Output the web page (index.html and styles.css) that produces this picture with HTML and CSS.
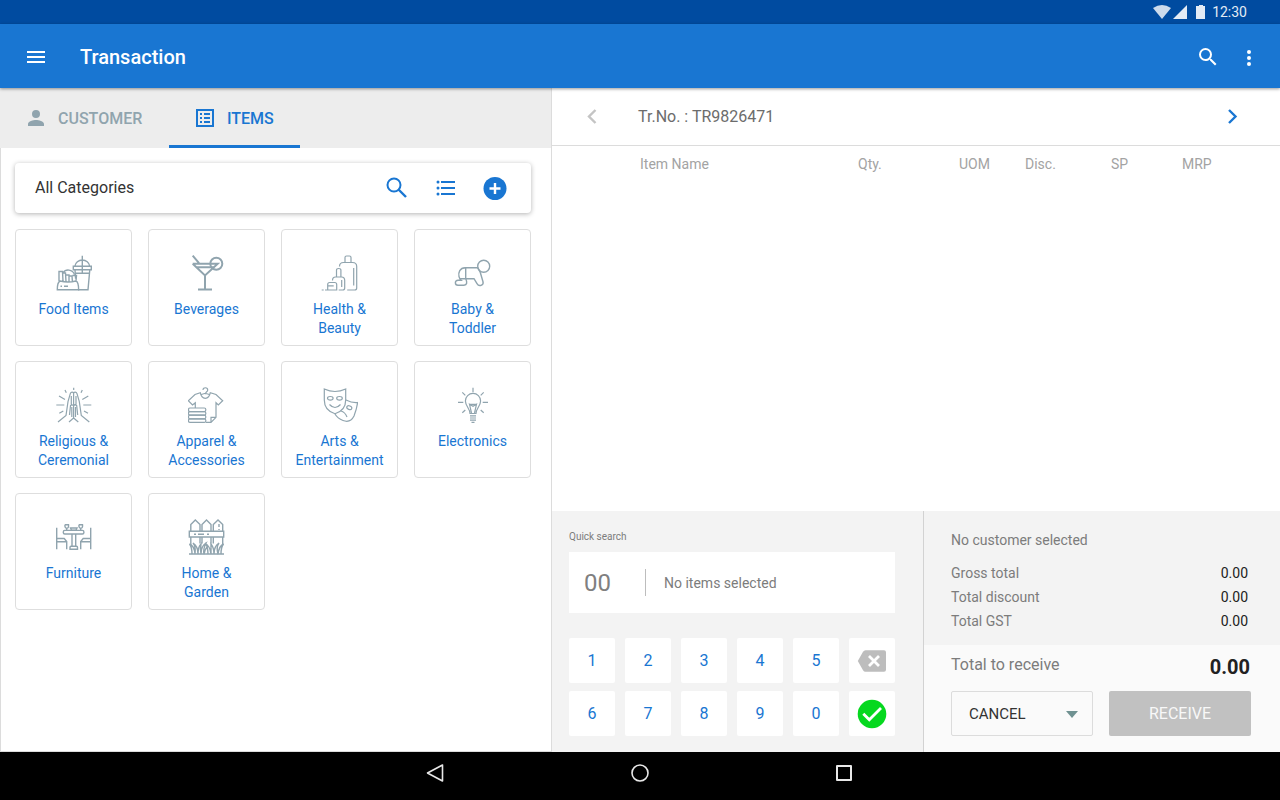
FILE: index.html
```html
<!DOCTYPE html>
<html lang="en">
  <head>
    <meta charset="UTF-8" />
    <meta name="viewport" content="width=device-width, initial-scale=1.0" />
    <title>Transaction</title>
    <link rel="stylesheet" href="styles.css">
  </head>
  <body>
    <div class="status-bar">
      <svg width="52" height="16" viewBox="0 0 52 16" fill="#e3ebf5">
        <path fill="#ccdaeb" d="M0 4 Q9 -2 18 4 L9 15 Z" />
        <path d="M20 15 L34 1 V15 Z" />
        <path d="M43 2 h3 V1 h4 v1 h2 V15 H43 Z" />
      </svg>
      <span>12:30</span>
    </div>

    <header class="app-bar">
      <button class="icon-button" aria-label="Menu">
        <svg width="24" height="24" viewBox="0 0 24 24" fill="currentColor"><path d="M3 6h18v2H3zM3 11h18v2H3zM3 16h18v2H3z" /></svg>
      </button>
      <h1>Transaction</h1>
      <button class="icon-button" aria-label="Search">
        <svg width="24" height="24" viewBox="0 0 24 24" fill="currentColor"><path d="M15.5 14h-.79l-.28-.27A6.47 6.47 0 0 0 16 9.5 6.5 6.5 0 1 0 9.5 16c1.61 0 3.09-.59 4.23-1.57l.27.28v.79l5 4.99L20.49 19l-4.99-5zm-6 0a4.5 4.5 0 1 1 0-9 4.5 4.5 0 0 1 0 9z" /></svg>
      </button>
      <button class="icon-button" aria-label="More">
        <svg width="24" height="24" viewBox="0 0 24 24" fill="currentColor"><circle cx="12" cy="7" r="2" /><circle cx="12" cy="13" r="2" /><circle cx="12" cy="19" r="2" /></svg>
      </button>
    </header>

    <main class="main">
      <section class="catalog">
        <nav class="tabs">
          <button class="tab">
            <svg width="24" height="24" viewBox="0 0 24 24" fill="currentColor"><path d="M12 12a4 4 0 1 0 0-8 4 4 0 0 0 0 8zm0 2c-2.67 0-8 1.34-8 4v2h16v-2c0-2.66-5.33-4-8-4z" /></svg>
            CUSTOMER
          </button>
          <button class="tab active">
            <svg width="24" height="24" viewBox="0 0 24 24" fill="currentColor"><path fill-rule="evenodd" d="M3 3h18v18H3zM5 5v14h14V5zM7 7h2v2H7zM11 7h6v2h-6zM7 11h2v2H7zM11 11h6v2h-6zM7 15h2v2H7zM11 15h6v2h-6z" /></svg>
            ITEMS
          </button>
        </nav>

        <div class="catalog-body">
          <div class="toolbar">
            <h2>All Categories</h2>
            <button class="icon-button" aria-label="Search items">
              <svg width="24" height="24" viewBox="0 0 24 24" fill="none" stroke="currentColor" stroke-width="2"><circle cx="9" cy="9" r="6.5" /><path stroke-width="2.4" d="M13.500 13.500l7.500 7.500" /></svg>
            </button>
            <button class="icon-button" aria-label="List view">
              <svg width="24" height="24" viewBox="0 0 24 24" fill="currentColor"><path d="M7 5h14v2H7zM7 11h14v2H7zM7 17h14v2H7z" /><circle cx="4" cy="6" r="1.5" /><circle cx="4" cy="12" r="1.5" /><circle cx="4" cy="18" r="1.5" /></svg>
            </button>
            <button class="icon-button" aria-label="Add category">
              <svg width="24" height="24" viewBox="0 0 24 24"><circle cx="12" cy="12.500" r="11.500" fill="currentColor" /><path stroke="#fff" stroke-width="2.400" d="M12 7v11M6.500 12.500h11" /></svg>
            </button>
          </div>

          <div class="categories">
            <button class="category">
              <svg viewBox="0 0 37 37" class="medium">
                <path d="M27.3 .7V18M19.8 11.3a7.6 7.6 0 0 1 15 0M18.3 11.3h18v3.4h-18zM20 14.7l.6 9M20.5 18.2h14M34.8 14.7l-1.8 20H23" />
                <path d="M5 26c-2 1-2.7 4-2.7 8.700h21.300c0-5-.6-8-2.600-8.700-5 1.300-11 1.300-16 0zM4 26V16.500h3.500l.5 9.800M7.500 18h3l.5 8.700M11 20h3v6.700M14 21h3l.4 5.500M17.500 20.500h4l-.5 5.500M8.500 17.500c2-3.500 9-3.500 11 2" />
                <path d="M5.500 31.300h1.500M9 31.300h4" />
              </svg>
              <span>Food Items</span>
            </button>
            <button class="category">
              <svg viewBox="0 0 37 37" class="bold">
                <path d="M4.700 .7l6.300 7.500M4.700 8.800h25L17 20.500 4.700 8.800M8.500 12.200h17M17 20.500v14M10 34.600h14" />
                <circle cx="28.300" cy="8.800" r="6" />
              </svg>
              <span>Beverages</span>
            </button>
            <button class="category">
              <svg viewBox="0 0 37 37">
                <path d="M24 7V2.500q0-1.500 1.500-1.500h3q1.500 0 1.500 1.500V7M18.500 11.500q0-4 4-4h9q4.200 0 4.200 4V33q0 2-2 2h-7.500M32.700 13v17.500" />
                <path d="M15.500 21.500v-6.500q0-1.500 2.200-1.500t2.200 1.500v6.500M11.500 25.500q0-3.500 3-3.500h6q3.200 0 3.200 3.500V33q0 2-2 2h-4M20.700 25v7" />
                <path d="M6.700 29.500q0-2 2-2h5q2 0 2 2V35h-9zM6.700 30.800h6M.7 35h2M4 35h2.500" />
              </svg>
              <span>Health &amp;<br />Beauty</span>
            </button>
            <button class="category">
              <svg viewBox="0 0 37 37" class="medium">
                <circle cx="29.700" cy="11.300" r="6" />
                <path d="M23.700 12.700H11c-5 0-7 5-6 9 .4 1.500 1 2.700 2 3.500H4c-3.500 0-3.500 5 0 5h6c3 0 3.500-3 1.700-6.500V12.700M6 23.700h14l3 5c2 3.500 7 1.500 6-2L26.300 17.500M23.700 12.700l2.600 4.800" />
              </svg>
              <span>Baby &amp;<br />Toddler</span>
            </button>
            <button class="category">
              <svg viewBox="0 0 37 37">
                <path d="M18.700 .7V3M10 3l1.300 2.700M27.300 3L26 5.700M4 9l6 3.500M33.300 9l-6 3.500M1.300 18h8M28.300 18h8M4.300 26.300l4-2.300M33 26.300l-4-2.300" />
                <path d="M3 35l8-6.500L13 14.700l2.300-8c.7-2.300 3.300-2 3.300 0V31l-4.600 4M34.300 35l-8-6.500-2-13.800-2.300-8c-.7-2.300-3.400-2-3.400 0M18.600 31l4.700 4M16.300 9v9M21 9v9M14.500 28l1-9.500q1.500-1.500 3 0M22.700 28l-1-9.500q-1.500-1.500-3 0M16.800 20v10M20.500 20v10" />
              </svg>
              <span>Religious &amp;<br />Ceremonial</span>
            </button>
            <button class="category">
              <svg viewBox="0 0 37 37">
                <path d="M15 3c0-3 4.700-3 4.700 0 0 2-2.400 1.500-2.400 4.300M7.300 21v-5.300L4.500 18 .3 13.700 7 7.500l5.300-1.800q1 5.600 5 5.600t5-5.600L28 7.500l6.700 6.200-4.400 4.300-2.300-2.300v14.600l-5 5h-5M23 35.300v-5h5M12.500 7.800l4.800-1.500 4.800 1.500" />
                <rect x=".5" y="21" width="17.300" height="3.600" rx="1.500" />
                <rect x=".5" y="24.600" width="17.300" height="3.600" rx="1.500" />
                <rect x=".5" y="28.200" width="17.300" height="3.600" rx="1.500" />
                <rect x=".5" y="31.800" width="17.300" height="3.600" rx="1.500" />
              </svg>
              <span>Apparel &amp;<br />Accessories</span>
            </button>
            <button class="category">
              <svg viewBox="0 0 37 37">
                <path d="M3.300 2q10.700 5 21.400 0v11c0 8-5 12-10.700 13.700C8.300 25 3.300 21 3.300 13zM8.500 17.500q5.500 6 11 0" />
                <ellipse cx="9.300" cy="11.300" rx="2.800" ry="1.800" />
                <ellipse cx="18.500" cy="11.300" rx="2.800" ry="1.800" />
                <path d="M25 13q6 3 11.600 2.500c-.5 4-1.600 8-3.600 13.500-2.500 5-7 6-11 4.500-3.500-1.300-6-3-8-6.500M20 24q4 1 6 6" />
                <ellipse cx="28.300" cy="20.700" rx="2.600" ry="1.800" transform="rotate(20 28.300 20.700)" />
              </svg>
              <span>Arts &amp;<br />Entertainment</span>
            </button>
            <button class="category">
              <svg viewBox="0 0 37 37">
                <path d="M19 .7v4.600M8.300 5.300l3 3M29.700 5.300l-3 3M4 15.300h5.300M28.700 15.300H34M8.300 25.700l3-2.700M29.700 25.700l-3-2.700" />
                <path d="M16 26.500c0-5-4.600-7.500-4.600-12.500a7.600 7.600 0 0 1 15.200 0c0 5-4.600 7.500-4.600 12.500zM17.500 26l-2-8.700 3.500 2 3.500-2-2 8.700M15.500 17.300h7M16 28.800h6M16 31h6M16 33.200h6M17.500 35.300h3" />
              </svg>
              <span>Electronics</span>
            </button>
            <button class="category">
              <svg viewBox="0 0 37 37" class="medium">
                <path d="M1.700 8.700v21.600M1.700 19.500h7.500l2.500 3v7.800M1.700 22.700h10M35.700 8.700v21.600M35.700 19.500h-7.500l-2.500 3v7.800M35.700 22.700h-10" />
                <rect x="8.300" y="11.400" width="20.600" height="3.600" rx="1.500" />
                <path d="M17 15v12.300M20.700 15v12.300M15 30.300v-2q0-1 1-1h5.500q1 0 1 1v2zM10 5.700h3.500q.5 3.300-1.700 3.500Q9.500 9 10 5.700M11.700 9.200v2M24 5.700h3.500q.5 3.300-1.700 3.500Q23.500 9 24 5.700M25.700 9.200v2M15.500 9h6.500l-1 2.300h-4.500z" />
              </svg>
              <span>Furniture</span>
            </button>
            <button class="category">
              <svg viewBox="0 0 37 37" class="medium">
                <path d="M2.800 12.300V5.500L7.300 1 12 5.500v6.800M14 12.300V5.500L18.500 1 23 5.500v6.800M25.300 12.300V5.500L30 1l4.700 4.500v6.800M1.300 12.300h34.400V18H1.300zM6 15.200h2M10 15.200h6M19 15.200h2M31 5v3M31 10v1" />
                <path d="M2.800 18v8M12 18v6.500M14 18v6.500M23 18v6.500M25.300 18v6.500M34.700 18v8M1 35h35" />
                <path d="M4 35Q4 28 1.500 25q5 2 5.500 10Q8 27 5 24q5 3 5 11 0-7 3-10-1 5 0 10 0-8 5-11-3 6-2 11 1-5 3-7 1 3 1 7 0-8-3-11 5 3 6 11 0-5 0-10 3 4 3 10 0-8 5-11-3 4-1 11 1-8 5.500-10-2.500 3-2.500 10" />
              </svg>
              <span>Home &amp;<br />Garden</span>
            </button>
          </div>
        </div>
      </section>

      <section class="register">
        <div class="transaction-bar">
          <button class="icon-button previous" aria-label="Previous transaction">
            <svg width="24" height="24" viewBox="0 0 24 24" fill="none" stroke="currentColor" stroke-width="2.400"><path d="M15.500 5L9 11.500l6.500 6.500" /></svg>
          </button>
          <span>Tr.No. : TR9826471</span>
          <button class="icon-button next" aria-label="Next transaction">
            <svg width="24" height="24" viewBox="0 0 24 24" fill="none" stroke="currentColor" stroke-width="2.400"><path d="M9 5l6.500 6.500L9 18" /></svg>
          </button>
        </div>

        <div class="item-list">
          <table class="items">
            <thead>
              <tr>
                <th class="col-name">Item Name</th>
                <th class="col-qty">Qty.</th>
                <th class="col-uom">UOM</th>
                <th class="col-disc">Disc.</th>
                <th class="col-sp">SP</th>
                <th class="col-mrp">MRP</th>
              </tr>
            </thead>
            <tbody></tbody>
          </table>
        </div>

        <div class="checkout">
          <div class="quick-search">
            <label for="quickSearch">Quick search</label>
            <div class="search-box">
              <input type="text" id="quickSearch" value="00" />
              <span>No items selected</span>
            </div>
            <div class="keypad">
              <button>1</button>
              <button>2</button>
              <button>3</button>
              <button>4</button>
              <button>5</button>
              <button aria-label="Delete">
                <svg width="30" height="30" viewBox="0 0 30 30"><path fill="#bdbdbd" d="M8.500 4.300H27q2 0 2 2v17.400q0 2-2 2H8.500q-1.500 0-2.500-1.500L.8 15 6 5.800q1-1.500 2.500-1.500z" /><path stroke="#fff" stroke-width="2.800" d="M12 10l10 10M22 10L12 20" /></svg>
              </button>
              <button>6</button>
              <button>7</button>
              <button>8</button>
              <button>9</button>
              <button>0</button>
              <button aria-label="Confirm">
                <svg width="30" height="30" viewBox="0 0 30 30"><circle cx="15" cy="15" r="14.300" fill="#06d81f" /><path fill="none" stroke="#fff" stroke-width="2.800" d="M6.300 14.800l6 6L24 9" /></svg>
              </button>
            </div>
          </div>

          <div class="summary">
            <div class="totals">
              <p>No customer selected</p>
              <dl>
                <dt>Gross total</dt>
                <dd>0.00</dd>
                <dt>Total discount</dt>
                <dd>0.00</dd>
                <dt>Total GST</dt>
                <dd>0.00</dd>
              </dl>
            </div>
            <div class="payment">
              <div class="receivable">
                <span>Total to receive</span>
                <strong>0.00</strong>
              </div>
              <div class="actions">
                <div class="select">
                  <select aria-label="Transaction action">
                    <option>CANCEL</option>
                  </select>
                  <svg width="12" height="7" viewBox="0 0 12 7" fill="#6f9191"><path d="M0 0h12L6 7z" /></svg>
                </div>
                <button class="receive">RECEIVE</button>
              </div>
            </div>
          </div>
        </div>
      </section>
    </main>

    <nav class="system-nav">
      <button class="icon-button" aria-label="Back">
        <svg width="24" height="24" viewBox="0 0 24 24" fill="none" stroke="currentColor" stroke-width="1.600" stroke-linejoin="round"><path d="M18.500 4v16L3.500 12z" /></svg>
      </button>
      <button class="icon-button" aria-label="Home">
        <svg width="24" height="24" viewBox="0 0 24 24" fill="none" stroke="currentColor" stroke-width="1.600"><circle cx="12" cy="12" r="8" /></svg>
      </button>
      <button class="icon-button" aria-label="Recent apps">
        <svg width="24" height="24" viewBox="0 0 24 24" fill="none" stroke="currentColor" stroke-width="2" stroke-linejoin="round"><path d="M5 5h14v14H5z" /></svg>
      </button>
    </nav>
  </body>
</html>
```

FILE: styles.css
```css
* {
  box-sizing: border-box;
}

body {
  margin: 0;
  min-height: 100vh;
  display: flex;
  flex-direction: column;
  font-family: Roboto, sans-serif;
  font-size: 14px;
  line-height: 24px;
  color: #7c7c7c;
  background-color: #fff;
}

button,
input,
select {
  font-family: inherit;
  border: none;
  border-radius: 0;
  padding: 0;
  margin: 0;
  background: none;
}

button,
select {
  cursor: pointer;
}

svg {
  display: block;
}

h1,
h2,
p,
dl,
dd {
  margin: 0;
}

.icon-button {
  width: 24px;
  height: 24px;
  color: inherit;
}

/* Top bars */
.status-bar {
  height: 24px;
  padding-right: 33px;
  display: flex;
  align-items: center;
  justify-content: flex-end;
  gap: 7px;
  background-color: #004ba0;
  color: #e3ebf5;
}

.app-bar {
  position: relative;
  z-index: 1;
  height: 64px;
  padding: 2px 19px 0 24px;
  display: flex;
  align-items: center;
  gap: 17px;
  background-color: #1976d2;
  color: #fff;
  box-shadow: 0 1px 3px rgba(0, 0, 0, 0.4);
}

.app-bar h1 {
  flex: 1;
  margin-left: 15px;
  font-size: 20px;
  font-weight: 500;
}

.main {
  flex: 1;
  display: grid;
  grid-template-columns: 69fr 91fr;
}

/* Catalog */
.catalog {
  display: flex;
  flex-direction: column;
  border-right: 1px solid #dcdcdc;
}

.tabs {
  display: flex;
  height: 60px;
  background-color: #ededed;
}

.tab {
  min-width: 131px;
  padding: 0 24px;
  display: flex;
  align-items: center;
  gap: 10px;
  border-top: 3px solid transparent;
  border-bottom: 3px solid transparent;
  font-size: 16px;
  font-weight: 500;
  color: #90a4ae;
}

.tab:first-child {
  min-width: 169px;
}

.tab.active {
  color: #1976d2;
  border-bottom-color: #1976d2;
}

.catalog-body {
  flex: 1;
  padding: 15px 20px 15px 14px;
  border-left: 1px solid #dcdcdc;
  border-bottom: 1px solid #dcdcdc;
}

.toolbar {
  height: 50px;
  padding: 0 24px 0 20px;
  display: flex;
  align-items: center;
  gap: 25px;
  border-radius: 4px;
  box-shadow: 0 1px 5px rgba(0, 0, 0, 0.3);
  color: #1976d2;
}

.toolbar h2 {
  flex: 1;
  font-size: 16px;
  font-weight: 400;
  color: #333;
}

.categories {
  margin-top: 16px;
  display: grid;
  grid-template-columns: repeat(4, 1fr);
  gap: 15px 16px;
}

.category {
  min-height: 117px;
  padding: 25px 4px 6px;
  display: flex;
  flex-direction: column;
  align-items: center;
  gap: 8px;
  border: 1px solid #dedede;
  border-radius: 4px;
  font-size: 14px;
  line-height: 19px;
  color: #1976d2;
}

.category svg {
  width: 37px;
  height: 37px;
  fill: none;
  stroke: #90a4ae;
  stroke-width: 1.2;
}

.category svg.medium {
  stroke-width: 1.4;
}

.category svg.bold {
  stroke-width: 2;
}

/* Register */
.register {
  display: flex;
  flex-direction: column;
}

.transaction-bar {
  height: 58px;
  padding: 0 36px 0 28px;
  display: flex;
  align-items: center;
  gap: 34px;
  border-bottom: 1px solid #dcdcdc;
  font-size: 16px;
}

.transaction-bar span {
  flex: 1;
  color: #6c6c6c;
}

.previous {
  color: #c4c4c4;
}

.next {
  color: #1976d2;
}

.item-list {
  flex: 1;
}

.items {
  width: 100%;
  table-layout: fixed;
  border-collapse: collapse;
}

.items th {
  padding: 6px 0;
  font-weight: 400;
  text-align: left;
  color: #a3a3a3;
}

.items .col-name {
  padding-left: 88px;
}

.col-qty {
  width: 101px;
}

.col-uom {
  width: 66px;
}

.col-disc {
  width: 86px;
}

.col-sp {
  width: 71px;
}

.col-mrp {
  width: 98px;
}

.checkout {
  display: grid;
  grid-template-columns: 93fr 89fr;
  background-color: #f3f3f3;
}

.quick-search {
  padding: 18px 28px 16px 17px;
  border-right: 1px solid #d2d2d2;
}

.quick-search label {
  display: block;
  font-size: 10px;
  line-height: 16px;
}

.search-box {
  height: 61px;
  margin: 7px 0 25px;
  display: flex;
  align-items: center;
  background-color: #fff;
}

.search-box input {
  width: 77px;
  height: 27px;
  padding-left: 15px;
  border-right: 1px solid #bdbdbd;
  font-size: 24px;
  color: #808080;
}

.search-box span {
  margin-left: 18px;
}

.keypad {
  display: grid;
  grid-template-columns: repeat(6, 1fr);
  gap: 8px 10px;
}

.keypad button {
  height: 45px;
  display: flex;
  align-items: center;
  justify-content: center;
  border-radius: 2px;
  background-color: #fff;
  font-size: 16px;
  color: #1976d2;
}

.summary {
  display: flex;
  flex-direction: column;
}

.totals {
  padding: 17px 32px 12px 27px;
}

.totals p {
  margin-bottom: 9px;
}

.totals dl {
  display: grid;
  grid-template-columns: 1fr auto;
}

.totals dd {
  color: #212121;
}

.payment {
  flex: 1;
  padding: 8px 29px 16px 27px;
  background-color: #fafafa;
}

.receivable {
  padding-right: 1px;
  display: flex;
  justify-content: space-between;
  font-size: 16px;
}

.receivable strong {
  font-size: 20px;
  line-height: 28px;
  color: #212121;
}

.actions {
  margin-top: 10px;
  display: grid;
  grid-template-columns: 1fr 1fr;
  gap: 16px;
}

.select {
  position: relative;
}

.select select {
  width: 100%;
  height: 45px;
  padding: 0 32px 0 17px;
  appearance: none;
  border: 1px solid #dcdcdc;
  border-radius: 2px;
  font-size: 15px;
  color: #333;
}

.select svg {
  position: absolute;
  top: 20px;
  right: 15px;
  pointer-events: none;
}

.receive {
  height: 45px;
  border-radius: 2px;
  background-color: #c1c1c1;
  font-size: 16px;
  color: #f8f8f8;
}

/* System navigation */
.system-nav {
  height: 48px;
  padding-bottom: 6px;
  display: flex;
  align-items: center;
  justify-content: center;
  gap: 180px;
  background-color: #000;
  color: #e8e8e8;
}
```
